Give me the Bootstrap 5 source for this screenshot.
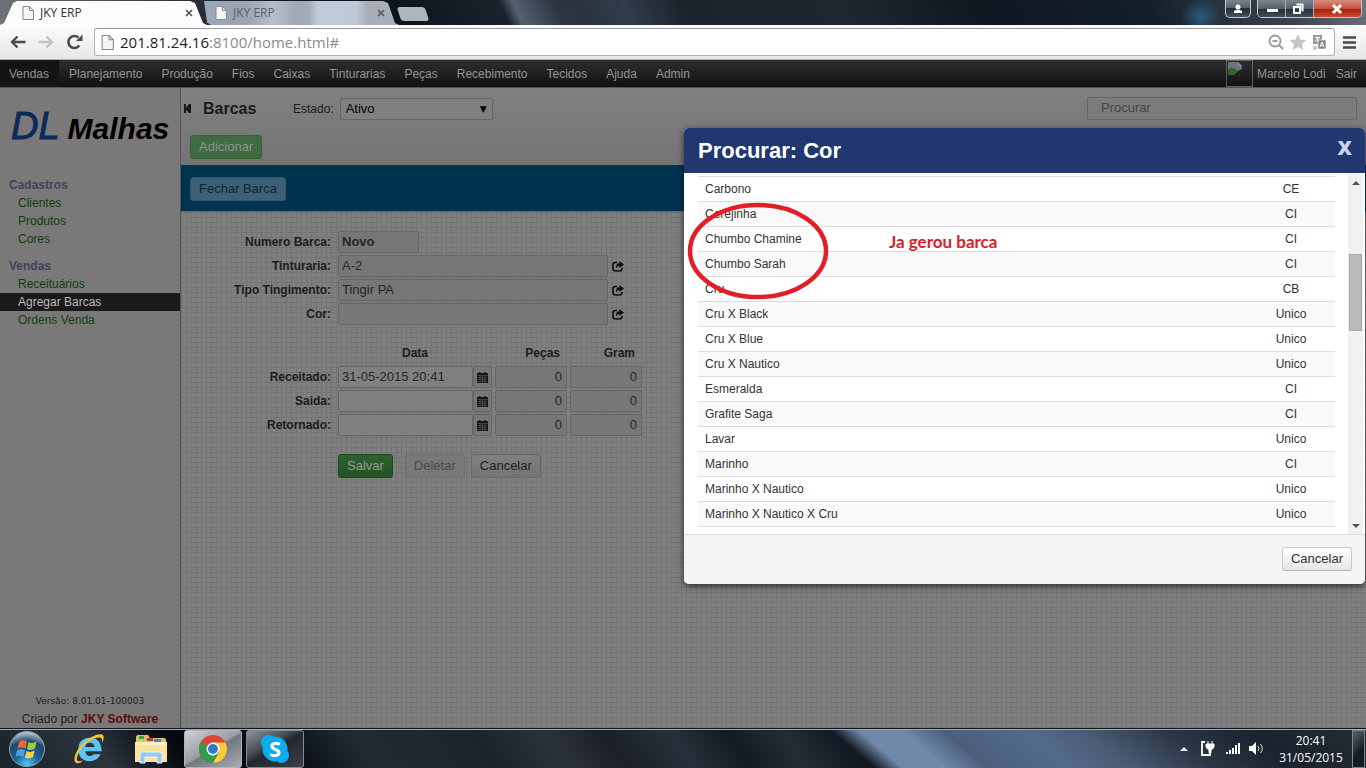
<!DOCTYPE html>
<html lang="pt-BR">
<head>
<meta charset="utf-8">
<meta name="viewport" content="width=device-width, initial-scale=1">
<title>JKY ERP</title>
<link href="https://cdn.jsdelivr.net/npm/bootstrap@5.3.0/dist/css/bootstrap.min.css" rel="stylesheet">
<style>
  body { font: 12px/18px "Liberation Sans", Arial, sans-serif; color: #1d1d1d; background: #808080; }
  button, input, select { font-family: inherit; }
  svg { display: block; flex: none; }
  .bare { border: 0; padding: 0; background: none; }

  /* window frame */
  .frame { height: 25px; background:
    radial-gradient(circle 20px at calc(100% - 165px) 17px, #2b5a80 0, transparent 100%),
    linear-gradient(65deg, transparent 37%, #52606e 38%, #2c3642 41%, transparent 44%),
    linear-gradient(65deg, #6f757c 0, #10161f 20%, #0f151e 30%, #1b242e 38%, #303d4a 46%, #1c232d 50%, #20262f 62%, #0e1620 72%, #12202c 84%, #39434c 94%, #6c767e 100%); }
  .chrome-tab { height: 24px; width: 207px; padding: 0 14px 0 22px; gap: 6px; font: 12px/24px "Open Sans", "Noto Sans", sans-serif; color: #333;
    clip-path: polygon(0 100%, 4px 92%, 13px 8%, 17px 0, 190px 0, 195px 8%, 203px 92%, 207px 100%); background: #fcfcfc; }
  .chrome-tab.idle { width: 195px; margin-left: -3px; padding: 0 14px 0 11px; background: linear-gradient(90deg, #98a8b8, #9ba4b0 22%, #b5bfcb 35%, #a1a8b3 48%, #a4acb8 54%, #bfccda 58%, #bdc9d7 78%, #a8afb8 84%); color: #59616a;
    clip-path: polygon(0 0, 179px 0, 184px 8%, 191px 92%, 195px 100%, 7px 100%, 3px 90%); }
  .new-tab { width: 28px; height: 14px; background: #aeb4bc; border-radius: 3px; transform: skewX(18deg); }
  .winbtns { height: 18px; gap: 6px; }
  .winbtns button, .wingroup { height: 18px; border: 1px solid #c2c8ce; border-top: 0; border-radius: 0 0 5px 5px; background: linear-gradient(#7c848d, #565f69 48%, #252d36 50%, #48525d); }
  .wingroup { overflow: hidden; background: none; }
  .wingroup button { border: 0; border-right: 1px solid #aab0b6; border-radius: 0; width: 28px; padding: 0; }
  .wingroup .win-close { width: 47px; border: 0; background: linear-gradient(#d98e80, #c3513c 48%, #a52009 50%, #cf5137); }

  .toolbar { height: 35px; background: linear-gradient(#fdfdfd, #e6e6e6); border-bottom: 1px solid #b0b0b0; padding: 4px 10px; }
  .reload { margin: 0 10px 0 8px; }
  .omnibox { height: 28px; border: 1px solid #b5b5b5; border-top-color: #999; border-radius: 3px; background: #fff; padding: 0 6px; gap: 6px; }
  .omnibox .url { font: 15px/26px "Open Sans", "Noto Sans", sans-serif; color: #8a8a8a; }
  .omnibox b { font-weight: 400; color: #222; }

  /* application */
  .topnav { height: 28px; background: linear-gradient(#2f2e2f, #111); border-bottom: 1px solid #555; }
  .topnav a { color: #949494; text-decoration: none; line-height: 28px; padding: 0 9px; }
  .topnav nav { gap: 1px; }
  .topnav .current { background: #141414; padding-right: 10px; }
  .topnav .who { padding-right: 5px; }
  .topnav .who a { padding: 0 4px; }
  .topnav .who a + a { padding-left: 6px; }
  .avatar { width: 27px; height: 27px; border: 1px solid #606060; }

  .side { width: 181px; background: #7a7878; border-right: 1px solid #555; padding-top: 15px; padding-bottom: 1px; }
  .logo { font-style: italic; font-size: 38px; line-height: 46px; color: #0c2a57; padding-left: 11px; gap: 8px; -webkit-text-stroke: 1px #0c2a57; }
  .logo strong { font-size: 30px; color: #000; -webkit-text-stroke: 0; }
  .side h2 { font-size: 12px; line-height: 18px; font-weight: 700; color: #44415e; margin: 0; padding-left: 9px; }
  .side .menu { padding-top: 24px; }
  .side .menu ul { margin-bottom: 9px; }
  .side li a { display: block; padding-left: 18px; color: #103f12; text-decoration: none; }
  .side li a.on { background: #1a1a1a; color: #bdbdbd; }
  .ver { font: 9px/18px "DejaVu Sans", sans-serif; }
  .side .brand { color: #5e0a11; font-weight: 700; text-decoration: none; }

  .head { height: 77px; background: linear-gradient(#808080, #747474); padding: 9px 9px 0 3px; }
  .head h1 { font-size: 16px; line-height: 22px; font-weight: 700; margin: 0; width: 90px; color: #1b1b1b; }
  .head label { margin-right: 6px; }
  .field { height: 22px; border: 1px solid #666; border-radius: 2px; background: #777; font-size: 13px; line-height: 18px; padding: 0 4px 2px 3px; color: #262626; min-width: 0; }
  .field.open { background: #808080; }
  .field.short { width: 81px; }
  .estado { width: 153px; appearance: none; padding: 0 5px; color: #000; }
  .arrow { right: 6px; top: 0; font: 9px/22px "DejaVu Sans", sans-serif; color: #000; pointer-events: none; }
  .search { width: 270px; height: 23px; padding-left: 13px; background: #7c7c7c; }
  .search::placeholder { color: #444; opacity: 1; }
  .b { font-size: 13px; line-height: 18px; padding: 2px 8px 4px; border: 1px solid #686868; border-radius: 3px; height: 24px; background: linear-gradient(#808080, #747474); color: #222; }
  .b.add { border-color: #365f36; background: #3f6b40; color: #929292; margin: 15px 0 0 6px; }
  .b.save { border-color: #1d491d; background: linear-gradient(#2e622e, #275227); color: #9a9a9a; margin-right: 12px; }
  .b.off { background: #787878; border-color: #707070; color: #4b4b4b; margin-right: 6px; }
  .b.fechar { background: #3b6078; border-color: #32566c; color: #15242e; }
  .b.light { background: linear-gradient(#fff, #e6e6e6); border-color: #c9c9c9 #c9c9c9 #b3b3b3; color: #333; }
  .bluebar { height: 47px; background: #003350; border-bottom: 1px solid #5b6a73; padding: 12px 9px; }

  .work { background-color: #7f7f7f; background-image: linear-gradient(#747474 1px, transparent 1px), linear-gradient(90deg, #747474 1px, transparent 1px); background-size: 5px 5px; padding-top: 19px; }
  .rows { display: grid; grid-template-columns: 150px 270px auto; column-gap: 7px; row-gap: 2px; justify-content: start; align-items: center; }
  .rows label, .dates th { font-weight: 700; text-align: right; color: #1c1c1c; }
  .rows .go { margin-left: -3px; }
  .dates { border-collapse: separate; border-spacing: 0 2px; margin-top: 15px; table-layout: fixed; width: 461px; }
  .dates th, .dates td { padding: 0; height: 22px; }
  .dates tbody th, .dates thead th { padding-right: 7px; }
  .dates .num { width: 72px; text-align: right; display: block; margin-left: auto; }
  .dates .day { width: 135px; }
  .dates .pick { width: 19px; padding: 0; }
  .acts { padding: 16px 0 0 157px; }

  /* dialog */
  .picker { top: 40px; right: 1px; width: 681px; border-radius: 5px; background: #fff; box-shadow: 0 2px 6px #000a; overflow: hidden; }
  .picker header { height: 45px; background: #21376f; padding: 0 13px 0 14px; }
  .picker h2 { font-size: 22px; line-height: 45px; font-weight: 700; color: #fff; margin: 0; }
  .picker .x { font: 800 20px/40px "Open Sans", sans-serif; color: #cdd3e4; }
  .list { height: 361px; padding: 3px 2px 0 14px; }
  .list table { font-size: 12px; color: #333; width: 637px; }
  .list td { height: 25px; border-top: 1px solid #ddd; padding: 0 7px; }
  .list td + td { width: 88px; text-align: center; padding: 0; }
  .list tr:nth-child(even) td { background: #f9f9f9; }
  .list tbody { border-bottom: 1px solid #ddd; }
  .bar { width: 15px; margin-top: -3px; background: #f1f1f1; padding: 8px 1px 6px; }
  .thumb { height: 77px; margin-top: 69px; background: #bcbcbc; border: 1px solid #a8a8a8; }
  .picker footer { height: 50px; background: #f5f5f5; border-top: 1px solid #ddd; padding: 12px 13px; }
  .note { left: 3px; top: 74px; pointer-events: none; }
  .note text { font: 700 17px Lato, "Open Sans", sans-serif; fill: #d8202a; }

  /* taskbar */
  .task { height: 39px; border-top: 1px solid #a2a8b2; box-shadow: 0 -1px #10161f; color: #fff; background:
    linear-gradient(40deg, transparent 62%, #6f87a8 64%, #7089aa 67%, #4a5f7c 70%, #526a8b 76%, #4a5b74 80%, #2a3645 86%, #1a222d 92%, #242c36 100%),
    linear-gradient(55deg, #1a222c 0, #2b333d 8%, #05080d 14%, #0b1017 22%, #222a33 27%, #1b232d 36%, #2c323a 41%, #1b1f27 45%, #26303a 50%, #131a22 54%, #262c34 58%, #111821 62%, #131a23 100%); }
  .pinned { width: 62px; height: 38px; display: flex; align-items: center; justify-content: center; }
  .start { width: 54px; margin-right: 4px; }
  .running { width: 58px; height: 38px; border: 1px solid #b0b4ba; border-radius: 3px; background: linear-gradient(150deg, #d0d2d5, #9a9da2 48%, #73777e 52%, #a9acb1); margin: 0 2px; }
  .running.dim { background: linear-gradient(150deg, #8e9299, #4c5057 35%, #22262d 50%, #3d4249); border-color: #858a91; }
  .clock { font: 12px/17px "Open Sans", "Noto Sans", sans-serif; width: 66px; text-align: center; margin: 0 8px 0 10px; }
  .peek { width: 13px; border: 1px solid #7d848e; background: linear-gradient(135deg, #59626d, #151b24 60%); margin-right: 1px; }
</style>
</head>
<body>
<svg width="0" height="0" class="position-absolute" aria-hidden="true">
  <defs>
    <symbol id="page" viewBox="0 0 12 14"><path d="M1 .5h6.500l4 4v9H1z" fill="#f6f6f6" stroke="#8a8a8a"/><path d="M7.500.5v4h4" fill="none" stroke="#8a8a8a"/></symbol>
    <symbol id="go" viewBox="0 0 12 11"><path d="M5 1.500H3.500Q1 1.500 1 4v3.500Q1 10 3.500 10h4Q10 10 10 7.500V7" fill="none" stroke="#111" stroke-width="1.600"/><path d="M7.500 0L12 3.500 7.500 7V5Q5 5 4 7.200 3.600 2.300 7.500 2z" fill="#111"/></symbol>
    <symbol id="cal" viewBox="0 0 11 11"><path d="M0 1h2V0h1.500v1h4V0H9v1h2v10H0z" fill="#151515"/><path d="M0 3.500h11M1 5.500h9M1 7.500h9M1 9.500h9M3 4v7M5.500 4v7M8 4v7" stroke="#5a5a5a" stroke-width=".6"/></symbol>
    <symbol id="x" viewBox="0 0 8 8"><path d="M1 1l6 6M7 1L1 7" stroke="#555" stroke-width="1.700"/></symbol>
  </defs>
</svg>
<div class="d-flex flex-column vh-100 overflow-hidden">

  <div class="frame d-flex align-items-end">
    <div class="chrome-tab d-flex align-items-center"><svg width="12" height="14"><use href="#page"/></svg><span class="flex-grow-1">JKY ERP</span><button class="bare" aria-label="Fechar aba"><svg width="8" height="8"><use href="#x"/></svg></button></div>
    <div class="chrome-tab idle d-flex align-items-center"><svg width="12" height="14"><use href="#page"/></svg><span class="flex-grow-1">JKY ERP</span><button class="bare" aria-label="Fechar aba"><svg width="8" height="8"><use href="#x"/></svg></button></div>
    <button class="bare new-tab mb-1" aria-label="Nova aba"></button>
    <div class="winbtns d-flex align-self-start ms-auto me-1">
      <button class="px-1" aria-label="Perfil"><svg width="16" height="14" viewBox="0 0 16 14"><circle cx="8" cy="5" r="2.500" fill="#fff"/><path d="M4 11V9q1-1 4-1.500Q11 8 12 9v2z" fill="#fff"/></svg></button>
      <div class="wingroup d-flex">
        <button aria-label="Minimizar"><svg width="27" height="16"><rect x="9" y="8" width="11" height="3" fill="#fff"/></svg></button>
        <button aria-label="Restaurar"><svg width="27" height="16"><path d="M10.500 3.500h6v7M8 6h6v6H8z" fill="none" stroke="#fff" stroke-width="2"/></svg></button>
        <button class="win-close" aria-label="Fechar"><svg width="47" height="16"><path d="M19 4l8 8M27 4l-8 8" stroke="#fff" stroke-width="3"/></svg></button>
      </div>
    </div>
  </div>

  <div class="toolbar d-flex align-items-center">
    <button class="bare" aria-label="Voltar"><svg width="16" height="14" viewBox="0 0 16 14"><path d="M15.500 7H2M7.500 1.500L2 7l5.500 5.500" fill="none" stroke="#4a4a4a" stroke-width="2.400"/></svg></button>
    <button class="bare ms-2 ps-1" aria-label="Avançar"><svg width="16" height="14" viewBox="0 0 16 14"><path d="M.5 7H14M8.500 1.500L14 7l-5.500 5.500" fill="none" stroke="#c4c4c4" stroke-width="2.400"/></svg></button>
    <button class="bare reload ps-1" aria-label="Recarregar"><svg width="18" height="16" viewBox="0 0 18 16"><path d="M13.300 11.500A6 6 0 1 1 12.500 3.500" fill="none" stroke="#4a4a4a" stroke-width="2.500"/><path d="M16.500.5V7H10z" fill="#4a4a4a"/></svg></button>
    <div class="omnibox d-flex align-items-center flex-grow-1">
      <svg width="13" height="15"><use href="#page"/></svg>
      <span class="url flex-grow-1"><b>201.81.24.16</b>:8100/home.html#</span>
      <svg width="62" height="18" viewBox="0 0 62 18"><circle cx="9" cy="8" r="5.500" fill="none" stroke="#999" stroke-width="1.800"/><path d="M6.500 8h5M13 12l4 4" stroke="#999" stroke-width="2"/><path d="M32 1l2.400 5.400 6 .6-4.500 4 1.300 6-5.200-3.100L26.800 17l1.300-6-4.500-4 6-.6z" fill="#c4c4c4"/><rect x="47" y="2" width="9" height="9" fill="#999"/><path d="M49 4.500h5M51.500 3.500v5M49 8.500l4-4" stroke="#fff"/><rect x="52" y="7" width="8" height="9" fill="#888" stroke="#fff" stroke-width=".6"/><path d="M54 14l2-5 2 5M54.500 12.500h3" stroke="#fff" fill="none"/><path d="M47 13l3 3M50 13v3h-3" stroke="#999" fill="none"/></svg>
    </div>
    <button class="bare ms-2" aria-label="Menu"><svg width="13" height="13"><path d="M0 1.500h13M0 6.500h13M0 11.500h13" stroke="#4a4a4a" stroke-width="2.600"/></svg></button>
  </div>

  <div class="topnav d-flex justify-content-between">
    <nav class="d-flex">
      <a href="#" class="current">Vendas</a><a href="#">Planejamento</a><a href="#">Produção</a><a href="#">Fios</a><a href="#">Caixas</a><a href="#">Tinturarias</a><a href="#">Peças</a><a href="#">Recebimento</a><a href="#">Tecidos</a><a href="#">Ajuda</a><a href="#">Admin</a>
    </nav>
    <div class="who d-flex">
      <span class="avatar"><svg width="16" height="16"><path d="M1 1h10l4 4v3l-4 2-4 3H1z" fill="#68747d"/><path d="M1 14V9q3-4 7-1l3 2-4 4z" fill="#34612f"/><path d="M11 1l4 4h-4z" fill="#8a8a8a"/></svg></span>
      <a href="#">Marcelo Lodi</a><a href="#">Sair</a>
    </div>
  </div>

  <div class="position-relative d-flex flex-grow-1">
    <aside class="side d-flex flex-column flex-shrink-0">
      <div class="logo d-flex align-items-baseline"><span>DL</span><strong>Malhas</strong></div>
      <div class="menu flex-grow-1">
        <h2>Cadastros</h2>
        <ul class="list-unstyled"><li><a href="#">Clientes</a></li><li><a href="#">Produtos</a></li><li><a href="#">Cores</a></li></ul>
        <h2>Vendas</h2>
        <ul class="list-unstyled"><li><a href="#">Receituários</a></li><li><a href="#" class="on">Agregar Barcas</a></li><li><a href="#">Ordens Venda</a></li></ul>
      </div>
      <div class="text-center"><div class="ver">Versão: 8.01.01-100003</div><div>Criado por <a class="brand" href="#">JKY Software</a></div></div>
    </aside>

    <main class="d-flex flex-column flex-grow-1">
      <div class="head">
        <div class="d-flex align-items-center">
          <svg width="19" height="9" viewBox="0 0 19 9"><path d="M0 0h2v3.500L5 0h2v9H5L2 5.500V9H0z" fill="#1a1a1a"/></svg>
          <h1>Barcas</h1>
          <label for="estado">Estado:</label>
          <div class="position-relative"><select id="estado" class="field open estado d-block"><option>Ativo</option></select><span class="arrow position-absolute">▼</span></div>
          <input class="field search ms-auto" type="search" placeholder="Procurar" aria-label="Procurar">
        </div>
        <button class="b add d-block">Adicionar</button>
      </div>
      <div class="bluebar"><button class="b fechar d-block">Fechar Barca</button></div>
      <div class="work flex-grow-1">
        <div class="rows">
          <label for="num">Numero Barca:</label><input id="num" class="field short fw-bold" value="Novo" readonly><span></span>
          <label for="tint">Tinturaria:</label><input id="tint" class="field" value="A-2" readonly><button class="bare go" aria-label="Escolher tinturaria"><svg width="12" height="11"><use href="#go"/></svg></button>
          <label for="tipo">Tipo Tingimento:</label><input id="tipo" class="field" value="Tingir PA" readonly><button class="bare go" aria-label="Escolher tipo"><svg width="12" height="11"><use href="#go"/></svg></button>
          <label for="cor">Cor:</label><input id="cor" class="field" readonly><button class="bare go" aria-label="Escolher cor"><svg width="12" height="11"><use href="#go"/></svg></button>
        </div>
        <table class="dates">
          <colgroup><col style="width:157px"><col style="width:154px"><col style="width:75px"><col style="width:75px"></colgroup>
          <thead><tr><td></td><th scope="col" class="text-center pe-0">Data</th><th scope="col">Peças</th><th scope="col">Gram</th></tr></thead>
          <tbody>
            <tr><th scope="row">Receitado:</th><td><div class="d-flex"><input class="field open day" aria-label="Data receitado" value="31-05-2015 20:41"><button class="field pick flex-shrink-0 d-flex align-items-center justify-content-center" aria-label="Calendário"><svg width="11" height="11"><use href="#cal"/></svg></button></div></td><td><input class="field num" aria-label="Peças receitado" value="0" readonly></td><td><input class="field num" aria-label="Gram receitado" value="0" readonly></td></tr>
            <tr><th scope="row">Saida:</th><td><div class="d-flex"><input class="field open day" aria-label="Data saida"><button class="field pick flex-shrink-0 d-flex align-items-center justify-content-center" aria-label="Calendário"><svg width="11" height="11"><use href="#cal"/></svg></button></div></td><td><input class="field num" aria-label="Peças saida" value="0" readonly></td><td><input class="field num" aria-label="Gram saida" value="0" readonly></td></tr>
            <tr><th scope="row">Retornado:</th><td><div class="d-flex"><input class="field open day" aria-label="Data retornado"><button class="field pick flex-shrink-0 d-flex align-items-center justify-content-center" aria-label="Calendário"><svg width="11" height="11"><use href="#cal"/></svg></button></div></td><td><input class="field num" aria-label="Peças retornado" value="0" readonly></td><td><input class="field num" aria-label="Gram retornado" value="0" readonly></td></tr>
          </tbody>
        </table>
        <div class="acts d-flex"><button class="b save">Salvar</button><button class="b off">Deletar</button><button class="b">Cancelar</button></div>
      </div>
    </main>

    <section class="picker position-absolute" role="dialog" aria-label="Procurar: Cor">
      <header class="d-flex justify-content-between"><h2>Procurar: Cor</h2><button class="bare x align-self-start" aria-label="Fechar">X</button></header>
      <div class="list d-flex justify-content-between">
        <table class="align-self-start">
          <tbody>
            <tr><td>Carbono</td><td>CE</td></tr><tr><td>Cerejinha</td><td>CI</td></tr><tr><td>Chumbo Chamine</td><td>CI</td></tr><tr><td>Chumbo Sarah</td><td>CI</td></tr><tr><td>Cru</td><td>CB</td></tr><tr><td>Cru X Black</td><td>Unico</td></tr><tr><td>Cru X Blue</td><td>Unico</td></tr><tr><td>Cru X Nautico</td><td>Unico</td></tr><tr><td>Esmeralda</td><td>CI</td></tr><tr><td>Grafite Saga</td><td>CI</td></tr><tr><td>Lavar</td><td>Unico</td></tr><tr><td>Marinho</td><td>CI</td></tr><tr><td>Marinho X Nautico</td><td>Unico</td></tr><tr><td>Marinho X Nautico X Cru</td><td>Unico</td></tr>
          </tbody>
        </table>
        <div class="bar d-flex flex-column">
          <svg class="mx-auto" width="8" height="4"><path d="M0 4l4-4 4 4z" fill="#505050"/></svg>
          <div class="thumb"></div>
          <svg class="mx-auto mt-auto" width="8" height="4"><path d="M0 0l4 4 4-4z" fill="#505050"/></svg>
        </div>
      </div>
      <footer class="d-flex justify-content-end"><button class="b light">Cancelar</button></footer>
      <svg class="note position-absolute" width="340" height="100"><ellipse cx="71" cy="49" rx="68" ry="46" fill="none" stroke="#e31e25" stroke-width="4.500"/><text x="202" y="46">Ja gerou barca</text></svg>
    </section>
  </div>

  <div class="task d-flex position-relative">
    <button class="bare pinned start" aria-label="Iniciar"><svg width="38" height="38" viewBox="0 0 38 38"><defs><radialGradient id="orb" cx=".5" cy=".95" r=".9"><stop offset="0" stop-color="#4fd0f5"/><stop offset=".4" stop-color="#1b5f98"/><stop offset=".75" stop-color="#24466d"/><stop offset="1" stop-color="#a9bac8"/></radialGradient></defs><circle cx="19" cy="19" r="17.500" fill="url(#orb)" stroke="#8aa0b3"/><path d="M11 12q4-3 8-.5l-1.500 7q-4-2-8 .3z" fill="#ee6a2c"/><path d="M20.500 12q4 2 8-.5L27 18.500q-4 2.500-8 .5z" fill="#9ccc3c"/><path d="M9 20.500q4-2.300 8-.3l-1.500 6.500q-4-2-8 .3z" fill="#4aa3e6"/><path d="M18.600 21q4 2 8-.5L25 27q-4 2.500-8 .5z" fill="#fcd144"/></svg></button>
    <button class="bare pinned" aria-label="Internet Explorer"><svg width="34" height="34" viewBox="0 0 32 32"><path fill-rule="evenodd" d="M27 21q-3 6.500-10.500 6.500Q6 27 6 16.500T16.500 5.500 28 18H12.500q.5 4.500 4.500 4.500 2.500 0 3.500-1.500zM12.500 14h8.700q-.5-4-4.400-4t-4.300 4z" fill="#5cc3f2"/><path d="M5 29.500C0 28.500 2 19 10 11S28 0 29.500 3.500q1 3-1.500 7 1-4-1-5C23 4 15 8 10 14S3 27 6 27.500q2 .5 5-1.500-3 3.500-6 3.500" fill="#f8c62d"/></svg></button>
    <button class="bare pinned" aria-label="Explorador"><svg width="34" height="30" viewBox="0 0 34 30"><path d="M2 3q0-2 2-2h10l2 3h14q2 0 2 2v21H2z" fill="#e2bf64"/><path d="M5 2h5v3H5z" fill="#35a44a"/><path d="M13 4h6v3h-6z" fill="#c3392e"/><path d="M20 5h7v3h-7z" fill="#3a86c5"/><path d="M1 8h32v20H1z" fill="#f8e59d"/><path d="M1 8h32v3H1z" fill="#fbf0bf"/><path d="M6 29V20q0-2 2-2h18q2 0 2 2v9h-5v-6H11v6z" fill="#9cc9e8" stroke="#e2f2fc"/></svg></button>
    <button class="bare pinned running" aria-label="Chrome"><svg width="30" height="30" viewBox="0 0 30 30"><circle cx="15" cy="15" r="14" fill="#db4437"/><path d="M15 15L2.900 8A14 14 0 0 0 15 29l6-10.500z" fill="#2c9f4b"/><path d="M15 8.500h12.400A14 14 0 0 1 15 29l6-10.500z" fill="#fbcd37"/><circle cx="15" cy="15" r="6.500" fill="#fff"/><circle cx="15" cy="15" r="5" fill="#3a78c9"/></svg></button>
    <button class="bare pinned running dim" aria-label="Skype"><svg width="32" height="32" viewBox="0 0 32 32"><circle cx="16" cy="16" r="12.500" fill="#0cadee"/><circle cx="9.500" cy="9.500" r="7.500" fill="#0cadee"/><circle cx="22.500" cy="22.500" r="7.500" fill="#0cadee"/><text x="16" y="24" text-anchor="middle" font-family="Open Sans" font-weight="700" font-size="22" fill="#fff">S</text></svg></button>
    <div class="d-flex ms-auto align-items-center">
      <svg width="92" height="18" viewBox="0 0 92 18"><path d="M4 11l4-4 4 4z" fill="#e8e8e8"/><path d="M29 2h-3v13h8V9" fill="none" stroke="#fff" stroke-width="1.800"/><path d="M32 1v3M36 1v3M30 4h8v2q0 3-3 3.500V13h-2V9.500Q30 9 30 6z" fill="#fff" stroke="#fff"/><path d="M51 12v2M54 10v4M57 8v6M60 5v9M63 3v11" stroke="#fff" stroke-width="2"/><path d="M73 6h3l4-4v13l-4-4h-3z" fill="#fff"/><path d="M82 6q2 2.500 0 5M84.500 4q3.500 4.500 0 9" fill="none" stroke="#ddd"/></svg>
      <div class="clock">20:41<br>31/05/2015</div>
      <button class="bare peek align-self-stretch" aria-label="Mostrar área de trabalho"></button>
    </div>
  </div>
</div>
<script src="https://cdn.jsdelivr.net/npm/bootstrap@5.3.0/dist/js/bootstrap.bundle.min.js"></script>
</body>
</html>
